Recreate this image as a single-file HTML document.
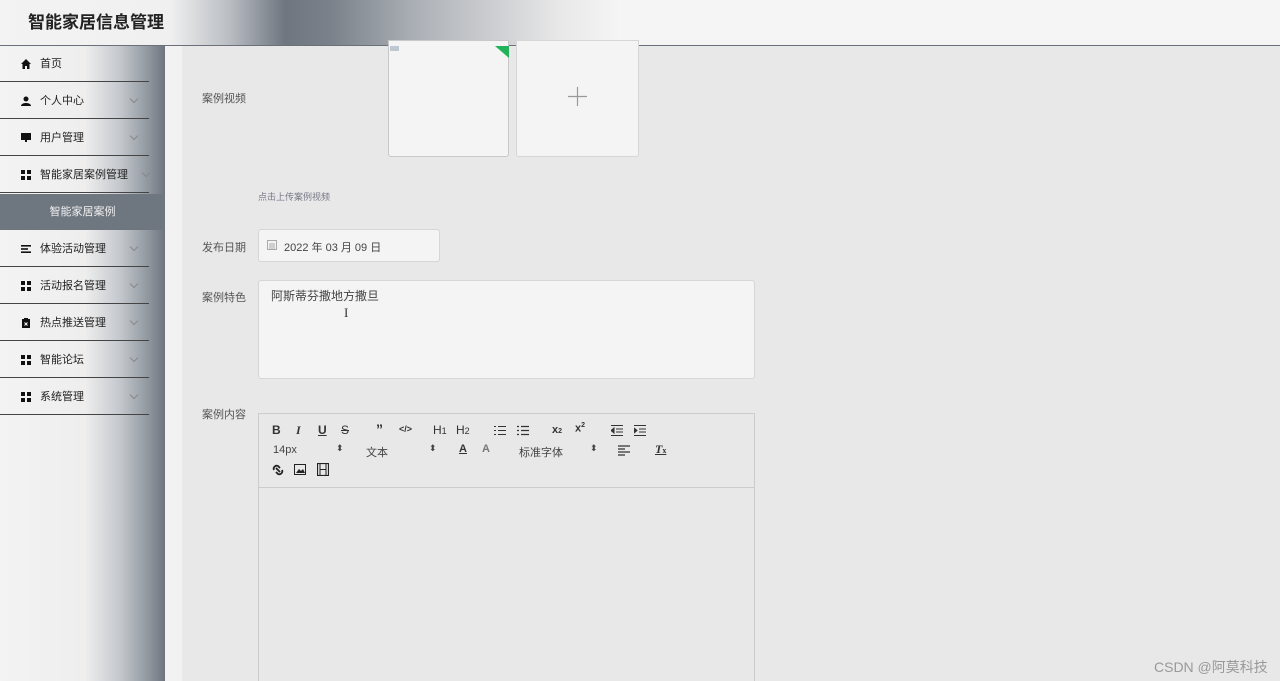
<!DOCTYPE html>
<html><head><meta charset="utf-8"><style>
*{margin:0;padding:0;box-sizing:border-box}
body{width:1280px;height:681px;overflow:hidden;background:#e8e8e8;font-family:"Liberation Sans","Noto Sans CJK SC",sans-serif;position:relative}
.hdr{position:absolute;left:0;top:0;width:1280px;height:46px;border-bottom:1px solid #6b717a;
background:linear-gradient(90deg,#f3f3f3 0,#f0f0f0 170px,#b9bdc2 230px,#6e7680 285px,#7a818a 330px,#aeb2b8 420px,#e8e8e8 560px,#f5f5f5 620px,#f5f5f5 100%)}
.hdr h1{position:absolute;left:28px;top:8px;font-size:17px;font-weight:bold;color:#222}
.side{position:absolute;left:0;top:46px;width:165px;height:635px;background:linear-gradient(90deg,#f3f3f3 0,#eeeeee 85px,#c4c8cd 120px,#8d949c 150px,#6d747e 165px)}
.strip{position:absolute;left:165px;top:46px;width:17px;height:635px;background:#f2f2f2}
.it{position:absolute;left:0;width:149px;height:37px;border-bottom:1px solid #444;font-size:11px;color:#222;line-height:38px;padding-left:40px}
.it .ic{position:absolute;left:21px;top:14px;width:10px;height:10px}
.it .ar{position:absolute;left:131px;top:14px;width:6px;height:6px;border-right:1px solid #888;border-bottom:1px solid #888;transform:rotate(45deg)}
.act{position:absolute;left:0;top:194px;width:165px;height:36px;background:#6e7680;color:#f0f0f0;font-size:11px;line-height:36px;text-align:center}
.lbl{position:absolute;font-size:11px;color:#555}
.box{position:absolute;background:#f4f4f4;border:1px solid #d6d6d6;border-radius:3px}
.tb{position:absolute;font-size:11px;color:#333;font-weight:bold}
</style></head><body>
<div class="hdr"><h1>智能家居信息管理</h1></div>
<div class="side">
</div>
<div class="strip"></div>
<div class="it" style="top:45px"><svg class="ic" viewBox="0 0 10 10"><path d="M5 0L0 5h1.5v5h2.5V7h2v3h2.5V5H10z" fill="#111"/></svg>首页</div>
<div class="it" style="top:82px"><svg class="ic" viewBox="0 0 10 10"><circle cx="5" cy="3" r="2.5" fill="#111"/><path d="M0 10c0-4 10-4 10 0z" fill="#111"/></svg>个人中心<span class="ar"></span></div>
<div class="it" style="top:119px"><svg class="ic" viewBox="0 0 10 10"><rect x="0" y="0" width="10" height="7" fill="#111"/><rect x="4" y="7" width="2" height="2" fill="#111"/></svg>用户管理<span class="ar"></span></div>
<div class="it" style="top:156px"><svg class="ic" viewBox="0 0 10 10"><rect width="4" height="4" fill="#111"/><rect x="6" width="4" height="4" fill="#111"/><rect y="6" width="4" height="4" fill="#111"/><rect x="6" y="6" width="4" height="4" fill="#111"/></svg>智能家居案例管理<span class="ar" style="left:143px"></span></div>
<div class="act">智能家居案例</div>
<div class="it" style="top:230px"><svg class="ic" viewBox="0 0 10 10"><rect y="1" width="10" height="1.6" fill="#111"/><rect y="4.2" width="7" height="1.6" fill="#111"/><rect y="7.4" width="10" height="1.6" fill="#111"/></svg>体验活动管理<span class="ar"></span></div>
<div class="it" style="top:267px"><svg class="ic" viewBox="0 0 10 10"><rect width="4" height="4" fill="#111"/><rect x="6" width="4" height="4" fill="#111"/><rect y="6" width="4" height="4" fill="#111"/><rect x="6" y="6" width="4" height="4" fill="#111"/></svg>活动报名管理<span class="ar"></span></div>
<div class="it" style="top:304px"><svg class="ic" viewBox="0 0 10 10"><rect x="1" y="1" width="8" height="9" fill="#111"/><rect x="3" y="0" width="4" height="2" fill="#111"/><path d="M3.5 4.5l3 3M6.5 4.5l-3 3" stroke="#fff" stroke-width="1"/></svg>热点推送管理<span class="ar"></span></div>
<div class="it" style="top:341px"><svg class="ic" viewBox="0 0 10 10"><rect width="4" height="4" fill="#111"/><rect x="6" width="4" height="4" fill="#111"/><rect y="6" width="4" height="4" fill="#111"/><rect x="6" y="6" width="4" height="4" fill="#111"/></svg>智能论坛<span class="ar"></span></div>
<div class="it" style="top:378px"><svg class="ic" viewBox="0 0 10 10"><rect width="4" height="4" fill="#111"/><rect x="6" width="4" height="4" fill="#111"/><rect y="6" width="4" height="4" fill="#111"/><rect x="6" y="6" width="4" height="4" fill="#111"/></svg>系统管理<span class="ar"></span></div>

<div class="lbl" style="left:202px;top:90px">案例视频</div>
<div class="box" style="left:388px;top:40px;width:121px;height:117px;border-radius:0 0 3px 3px;border-color:#c8c8c8"></div>
<svg style="position:absolute;left:495px;top:46px" width="14" height="12"><path d="M0 0H14V12z" fill="#22b35a"/></svg>
<div style="position:absolute;left:390px;top:46px;width:9px;height:5px;background:#9ab;opacity:.6"></div>
<div class="box" style="left:516px;top:40px;width:123px;height:117px;border-radius:0 0 3px 3px"></div>
<svg style="position:absolute;left:568px;top:87px" width="19" height="19"><path d="M9.5 0v19M0 9.5h19" stroke="#999" stroke-width="1.2"/></svg>
<div class="lbl" style="left:258px;top:190px;font-size:9px;color:#778">点击上传案例视频</div>
<div class="lbl" style="left:202px;top:239px">发布日期</div>
<div class="box" style="left:258px;top:229px;width:182px;height:33px"></div>
<svg style="position:absolute;left:267px;top:240px" width="10" height="10"><rect x=".5" y=".5" width="9" height="9" fill="none" stroke="#aaa"/><path d="M2 4h6M2 6h6M2 8h6" stroke="#aaa"/></svg>
<div class="lbl" style="left:284px;top:239px;color:#444">2022 年 03 月 09 日</div>
<div class="lbl" style="left:202px;top:289px">案例特色</div>
<div class="box" style="left:258px;top:280px;width:497px;height:99px"></div>
<div class="lbl" style="left:271px;top:287px;font-size:12px;color:#444">阿斯蒂芬撒地方撒旦</div>
<div class="lbl" style="left:344px;top:305px;font-size:13px;color:#333;font-family:'Liberation Serif'">I</div>
<div class="lbl" style="left:202px;top:406px">案例内容</div>
<div style="position:absolute;left:258px;top:413px;width:497px;height:268px;border:1px solid #ccc;border-bottom:none"></div>
<div style="position:absolute;left:259px;top:487px;width:495px;height:1px;background:#ccc"></div>
<div class="tb" style="left:272px;top:423px;font-size:12px">B</div>
<div class="tb" style="left:296px;top:423px;font-size:12px;font-style:italic;font-family:'Liberation Serif'">I</div>
<div class="tb" style="left:318px;top:423px;font-size:12px;text-decoration:underline">U</div>
<div class="tb" style="left:341px;top:423px;font-size:12px;text-decoration:line-through;font-weight:normal">S</div>
<div class="tb" style="left:376px;top:421px;font-size:14px">&rdquo;</div>
<div class="tb" style="left:399px;top:424px;font-size:9px">&lt;/&gt;</div>
<div class="tb" style="left:433px;top:423px;font-size:12px;font-weight:normal">H<span style="font-size:9px">1</span></div>
<div class="tb" style="left:456px;top:423px;font-size:12px;font-weight:normal">H<span style="font-size:9px">2</span></div>
<svg style="position:absolute;left:494px;top:425px" width="12" height="11"><path d="M4 1.5h8M4 5.5h8M4 9.5h8M0 1.5h2M0 5.5h2M0 9.5h2" stroke="#333"/></svg>
<svg style="position:absolute;left:517px;top:425px" width="12" height="11"><path d="M4 1.5h8M4 5.5h8M4 9.5h8M0 1.5h2M0 5.5h2M0 9.5h2" stroke="#333" stroke-width="1.2"/></svg>
<div class="tb" style="left:552px;top:424px;font-size:11px">x<span style="font-size:7px">2</span></div>
<div class="tb" style="left:575px;top:422px;font-size:11px">x<sup style="font-size:7px">2</sup></div>
<svg style="position:absolute;left:611px;top:425px" width="12" height="11"><path d="M0 .5h12M5 4h7M5 7h7M0 10.5h12M3 3L0 5.5 3 8z" stroke="#333" fill="#333"/></svg>
<svg style="position:absolute;left:634px;top:425px" width="12" height="11"><path d="M0 .5h12M5 4h7M5 7h7M0 10.5h12M0 3l3 2.5L0 8z" stroke="#333" fill="#333"/></svg>
<div class="lbl" style="left:273px;top:444px;color:#444">14px</div>
<div class="lbl" style="left:336px;top:443px;font-size:9px;color:#444">&#x2B0D;</div>
<div class="lbl" style="left:366px;top:444px;color:#444">文本</div>
<div class="lbl" style="left:429px;top:443px;font-size:9px;color:#444">&#x2B0D;</div>
<div class="tb" style="left:459px;top:443px;font-size:11px;text-decoration:underline">A</div>
<div class="tb" style="left:482px;top:443px;font-size:11px;color:#777">A</div>
<div class="lbl" style="left:519px;top:444px;color:#444">标准字体</div>
<div class="lbl" style="left:590px;top:443px;font-size:9px;color:#444">&#x2B0D;</div>
<svg style="position:absolute;left:618px;top:445px" width="12" height="11"><path d="M0 1h12M0 4h7M0 7h12M0 10h7" stroke="#333" stroke-width="1.2"/></svg>
<div class="tb" style="left:655px;top:442px;font-size:12px;font-style:italic;font-family:'Liberation Serif';text-decoration:underline">T<span style="font-size:8px;font-style:normal">x</span></div>
<svg style="position:absolute;left:272px;top:464px" width="12" height="12"><path d="M2 6a3 3 0 014-4l2 2M10 6a3 3 0 01-4 4l-2-2M4 4l4 4" stroke="#222" stroke-width="1.8" fill="none"/></svg>
<svg style="position:absolute;left:294px;top:464px" width="12" height="11"><rect x=".5" y=".5" width="11" height="10" fill="none" stroke="#222"/><path d="M2 9l3-4 2 2 2-2 2 4z" fill="#222"/></svg>
<svg style="position:absolute;left:317px;top:463px" width="12" height="13"><rect x=".5" y=".5" width="11" height="12" fill="none" stroke="#222" stroke-width="1.2"/><path d="M3 1v11M9 1v11M3 6.5h6" stroke="#222"/></svg>
<div class="lbl" style="left:1154px;top:657px;font-size:14px;color:#999">CSDN @阿莫科技</div>
</body></html>
